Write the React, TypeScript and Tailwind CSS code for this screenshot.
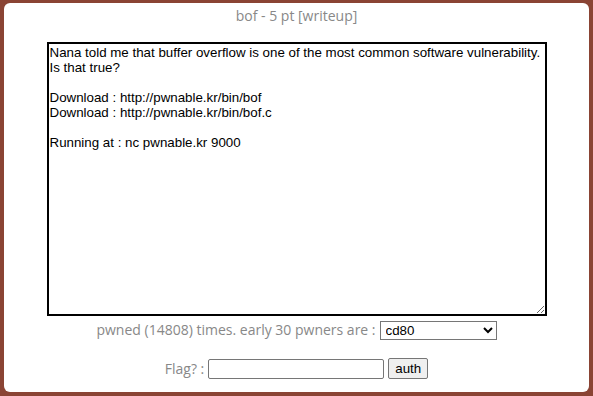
export default function App() {
  const desc = `Nana told me that buffer overflow is one of the most common software vulnerability. 
Is that true?

Download : http://pwnable.kr/bin/bof
Download : http://pwnable.kr/bin/bof.c

Running at : nc pwnable.kr 9000
`;

  return (
    <div className="h-[396px] w-[593px] bg-[#8a4434] px-[4px] pt-[3px] pb-[4px]">
      <div className="flex h-full flex-col items-center rounded-[6px] bg-white font-['Open_Sans',sans-serif] text-[#888888]">
        <div className="mt-[3px] text-[14px] leading-[20px]">bof - 5 pt [writeup]</div>

        <textarea
          readOnly
          defaultValue={desc}
          className="mt-[16px] h-[274px] w-[500px] border-2 border-black px-[1px] py-[1px] font-['Liberation_Sans',Arial,sans-serif] text-[13.333px] leading-[15px] text-black outline-none"
        />

        <div className="mt-[4px] flex items-center gap-[4px] text-[14px] leading-[20px]">
          <span>pwned (14808) times. early 30 pwners are :</span>
          <select className="h-[19px] w-[117px] border border-[#767676] bg-white pl-[1px] font-['Liberation_Sans',Arial,sans-serif] text-[13.333px] text-black">
            <option>cd80</option>
          </select>
        </div>

        <div className="mt-[18px] flex items-center gap-[4px] text-[14px] leading-[20px]">
          <span>Flag? :</span>
          <input
            type="text"
            className="h-[20px] w-[176px] rounded-[2px] border border-[#767676] px-[2px] font-['Liberation_Sans',Arial,sans-serif] text-[13.333px] text-black outline-none"
          />
          <button className="h-[21px] rounded-[2px] border border-[#767676] bg-[#efefef] px-[6px] font-['Liberation_Sans',Arial,sans-serif] text-[13.333px] text-black">
            auth
          </button>
        </div>
      </div>
    </div>
  );
}
